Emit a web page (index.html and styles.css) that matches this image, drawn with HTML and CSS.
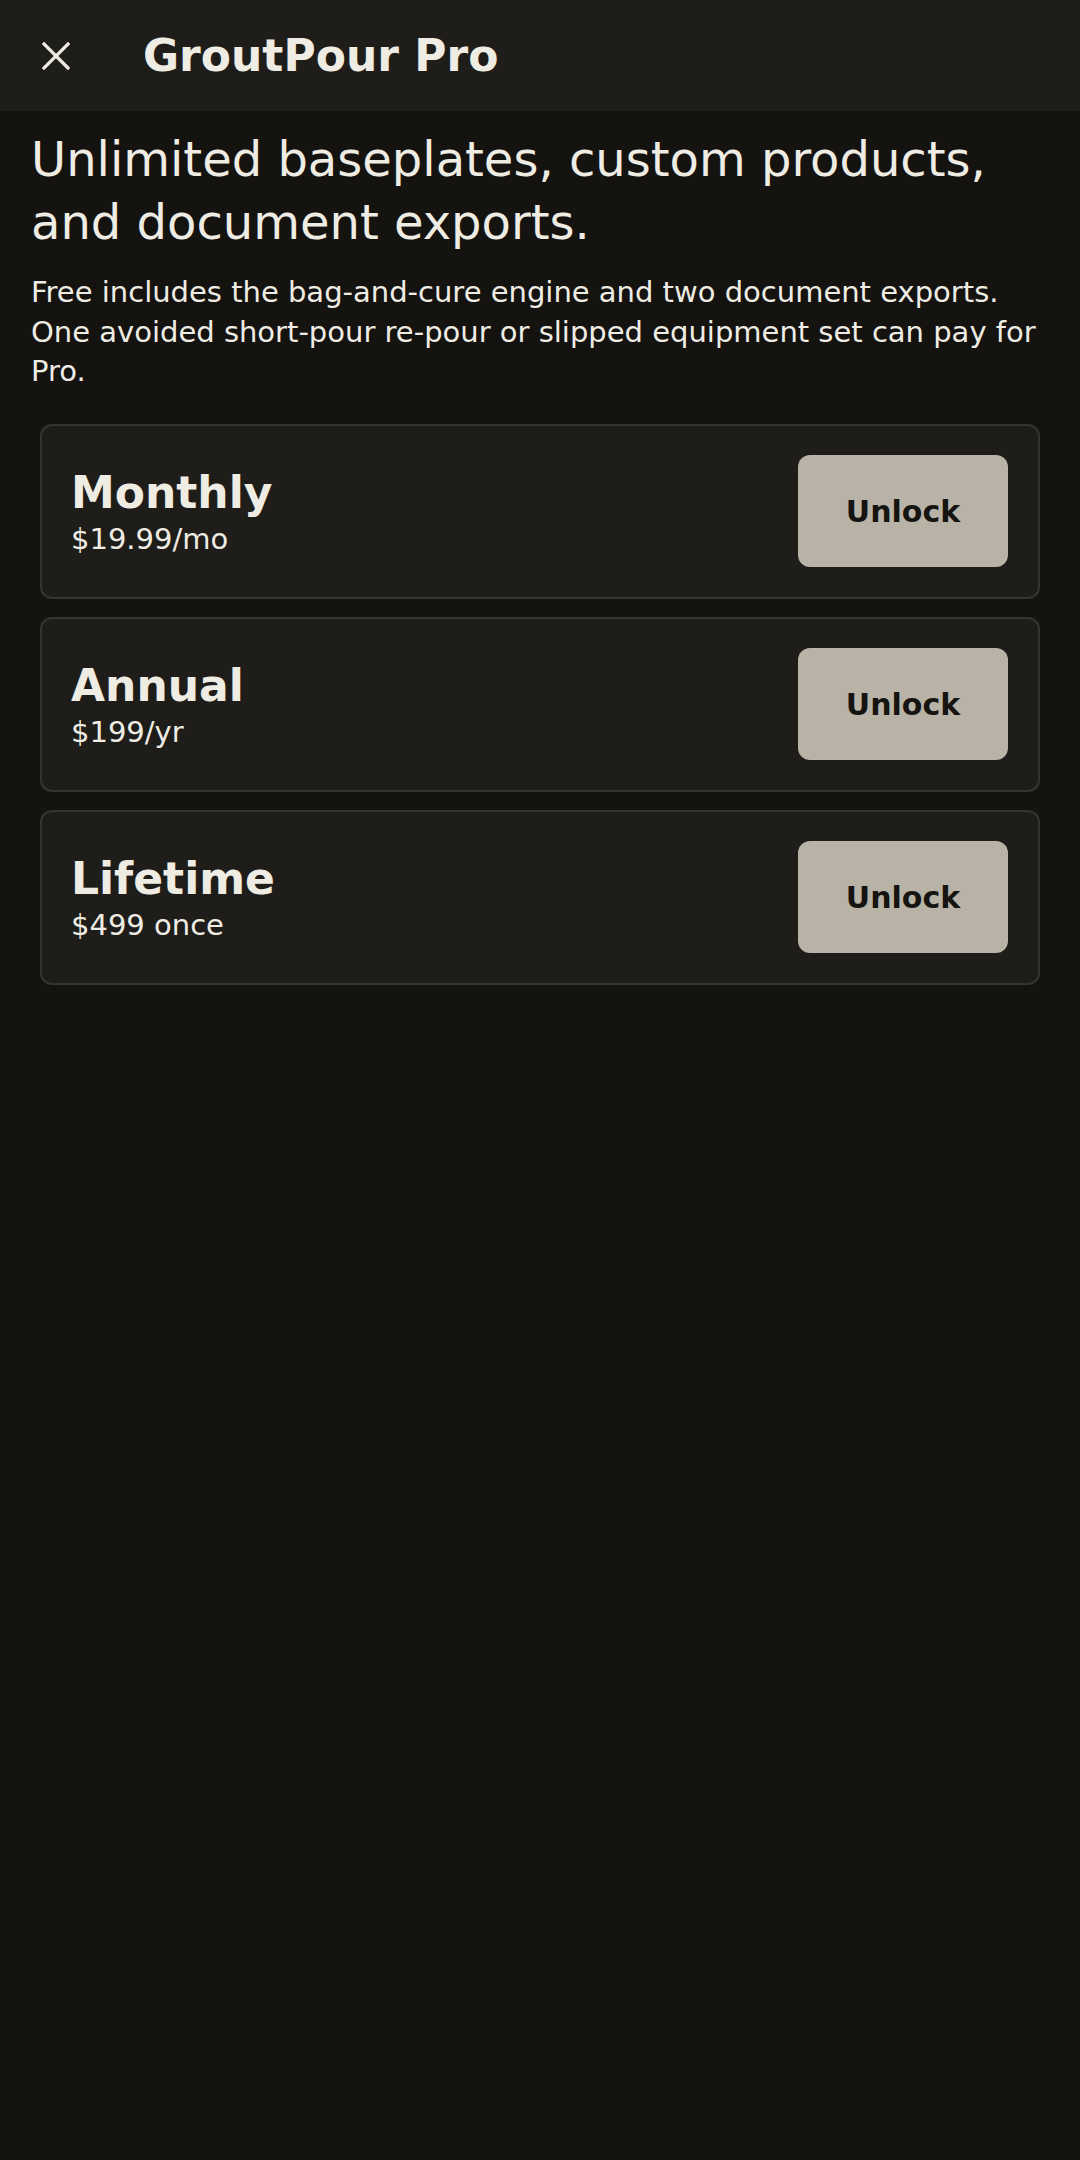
FILE: index.html
```html
<!DOCTYPE html>
<html lang="en">
<head>
<meta charset="utf-8" />
<title>GroutPour Pro</title>
<link rel="stylesheet" href="styles.css">
</head>

<body>
<div class="topbar">
    <a class="topbar-close" href="javascript:void(0)">
        <svg width="28" height="28" viewBox="0 0 28 28"><path d="M2 2L26 26M26 2L2 26" stroke="#efece4" stroke-width="3.2" stroke-linecap="square" fill="none"/></svg>
    </a>
    <span class="topbar-title">GroutPour Pro</span>
</div>

<div class="content">
    <h1 class="lead">Unlimited baseplates, custom products, and document exports.</h1>
    <p class="note">Free includes the bag-and-cure engine and two document exports. One avoided short-pour re-pour or slipped equipment set can pay for Pro.</p>

    <ul class="plans">
        <li class="plan">
            <div class="plan-info">
                <span class="plan-name">Monthly</span>
                <span class="plan-price">$19.99/mo</span>
            </div>
            <a class="plan-btn" href="javascript:void(0)">Unlock</a>
        </li>
        <li class="plan">
            <div class="plan-info">
                <span class="plan-name">Annual</span>
                <span class="plan-price">$199/yr</span>
            </div>
            <a class="plan-btn" href="javascript:void(0)">Unlock</a>
        </li>
        <li class="plan">
            <div class="plan-info">
                <span class="plan-name">Lifetime</span>
                <span class="plan-price">$499 once</span>
            </div>
            <a class="plan-btn" href="javascript:void(0)">Unlock</a>
        </li>
    </ul>
</div>
</body>
</html>
```

FILE: styles.css
```css
body,h1,p,ul,li,a,span{ margin:0; padding:0;}
a{ text-decoration:none;}
li{ list-style:none;}
body{ background:#141310; color:#efece4; font-family:"DejaVu Sans","Noto Sans",sans-serif; min-height:2160px;}

.topbar{ display:flex; align-items:center; height:111px; padding-left:42px; background:#1e1d19;}
.topbar-close{ display:flex; width:28px; height:28px;}
.topbar-title{ margin-left:73px; font-size:44px; font-weight:bold; color:#efece4;}

.content{ padding:0 31px;}
.lead{ margin-top:17px; font-size:48px; font-weight:normal; line-height:63px;}
.note{ margin-top:19px; font-size:29px; line-height:39.5px;}

.plans{ display:flex; flex-direction:column; gap:18px; margin:32px 9px 0;}
.plan{ display:flex; align-items:center; justify-content:space-between; padding:29.5px 30px 29.5px 29px; background:#1e1d19; border:2px solid #36352b; border-radius:12px;}
.plan-info{ display:flex; flex-direction:column;}
.plan-name{ font-size:44px; font-weight:bold; line-height:51px;}
.plan-price{ margin-top:4px; font-size:29px; line-height:34px;}
.plan-btn{ display:flex; align-items:center; justify-content:center; width:210px; height:112px; border-radius:12px; background:#b8b3a6; color:#151410; font-size:30px; font-weight:bold;}
```
